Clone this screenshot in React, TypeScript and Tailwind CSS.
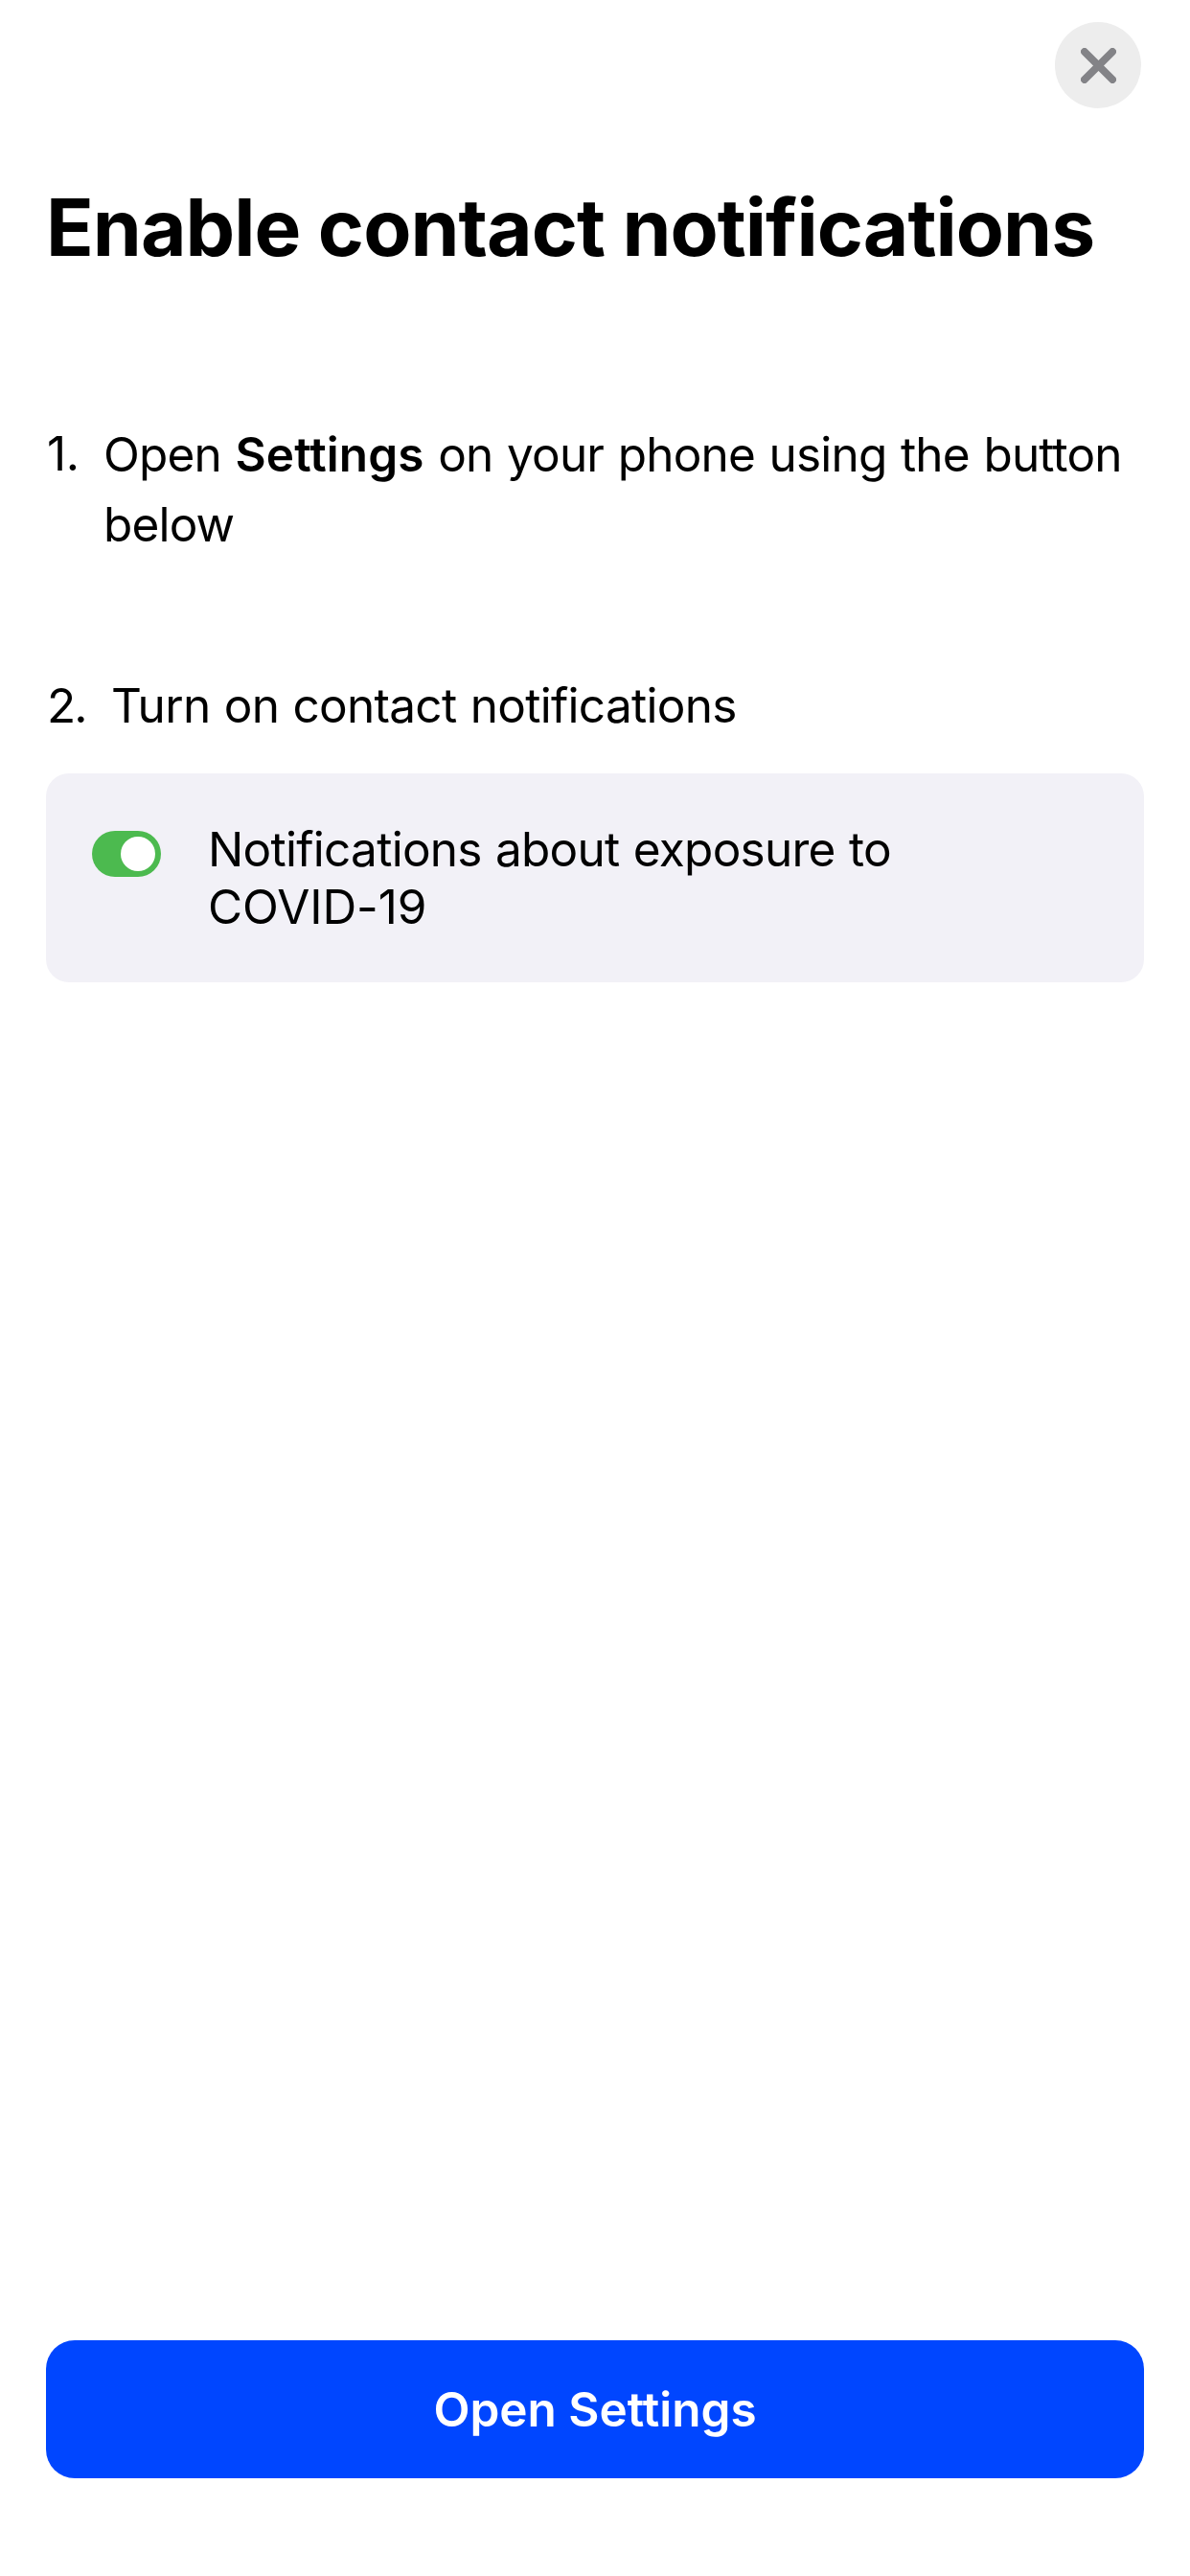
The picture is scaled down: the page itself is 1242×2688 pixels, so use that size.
export default function App() {
  return (
    <main className="flex h-[2688px] w-[1242px] flex-col bg-white px-12 font-['Inter',sans-serif] text-black">
      <header className="flex h-[113px] shrink-0 items-end justify-end pr-[3px]">
        <button aria-label="Close" className="flex size-[90px] items-center justify-center rounded-full bg-[#ededed]">
          <svg viewBox="0 0 37 37" className="size-[37px]" fill="none" stroke="#838387" strokeWidth="7.8" strokeLinecap="round">
            <path d="M3.9 3.9 33.1 33.1M33.1 3.9 3.9 33.1" />
          </svg>
        </button>
      </header>
      <h1 className="mt-[75px] whitespace-nowrap text-[82px] font-bold leading-[100px] tracking-[-0.97px]">Enable contact notifications</h1>
      <ol className="mt-[150px] text-[49.5px] leading-[73px]">
        <li className="flex">
          <span className="-mt-px w-[60px] shrink-0 pl-px tracking-[-0.5px]">1.</span>
          <p className="whitespace-nowrap tracking-[-0.83px] [word-spacing:1.5px]">
            Open <b className="font-semibold tracking-[0.1px]">Settings</b> on your phone using the button
            <br />
            below
          </p>
        </li>
        <li className="mt-[116px] flex">
          <span className="w-[68px] shrink-0 pl-px tracking-[-2px]">2.</span>
          <p className="whitespace-nowrap tracking-[-0.7px] [word-spacing:1px]">Turn on contact notifications</p>
        </li>
      </ol>
      <section className="mt-[34px] flex h-[218px] shrink-0 rounded-3xl bg-[#f2f1f7] pl-12 pt-[49px]">
        <div className="mt-[11px] flex h-12 w-[72px] items-center justify-end rounded-full bg-[#4cba4f] pr-[6px]">
          <div className="size-9 rounded-full bg-white" />
        </div>
        <p className="ml-[49px] whitespace-nowrap text-[49.5px] leading-[60px] tracking-[-0.73px] [word-spacing:1px]">
          Notifications about exposure to
          <br />
          <span className="tracking-[-0.1px]">COVID-19</span>
        </p>
      </section>
      <button className="mb-[102px] mt-auto h-36 shrink-0 rounded-[30px] bg-[#0046ff] text-[49.5px] font-semibold text-white">Open Settings</button>
    </main>
  );
}
